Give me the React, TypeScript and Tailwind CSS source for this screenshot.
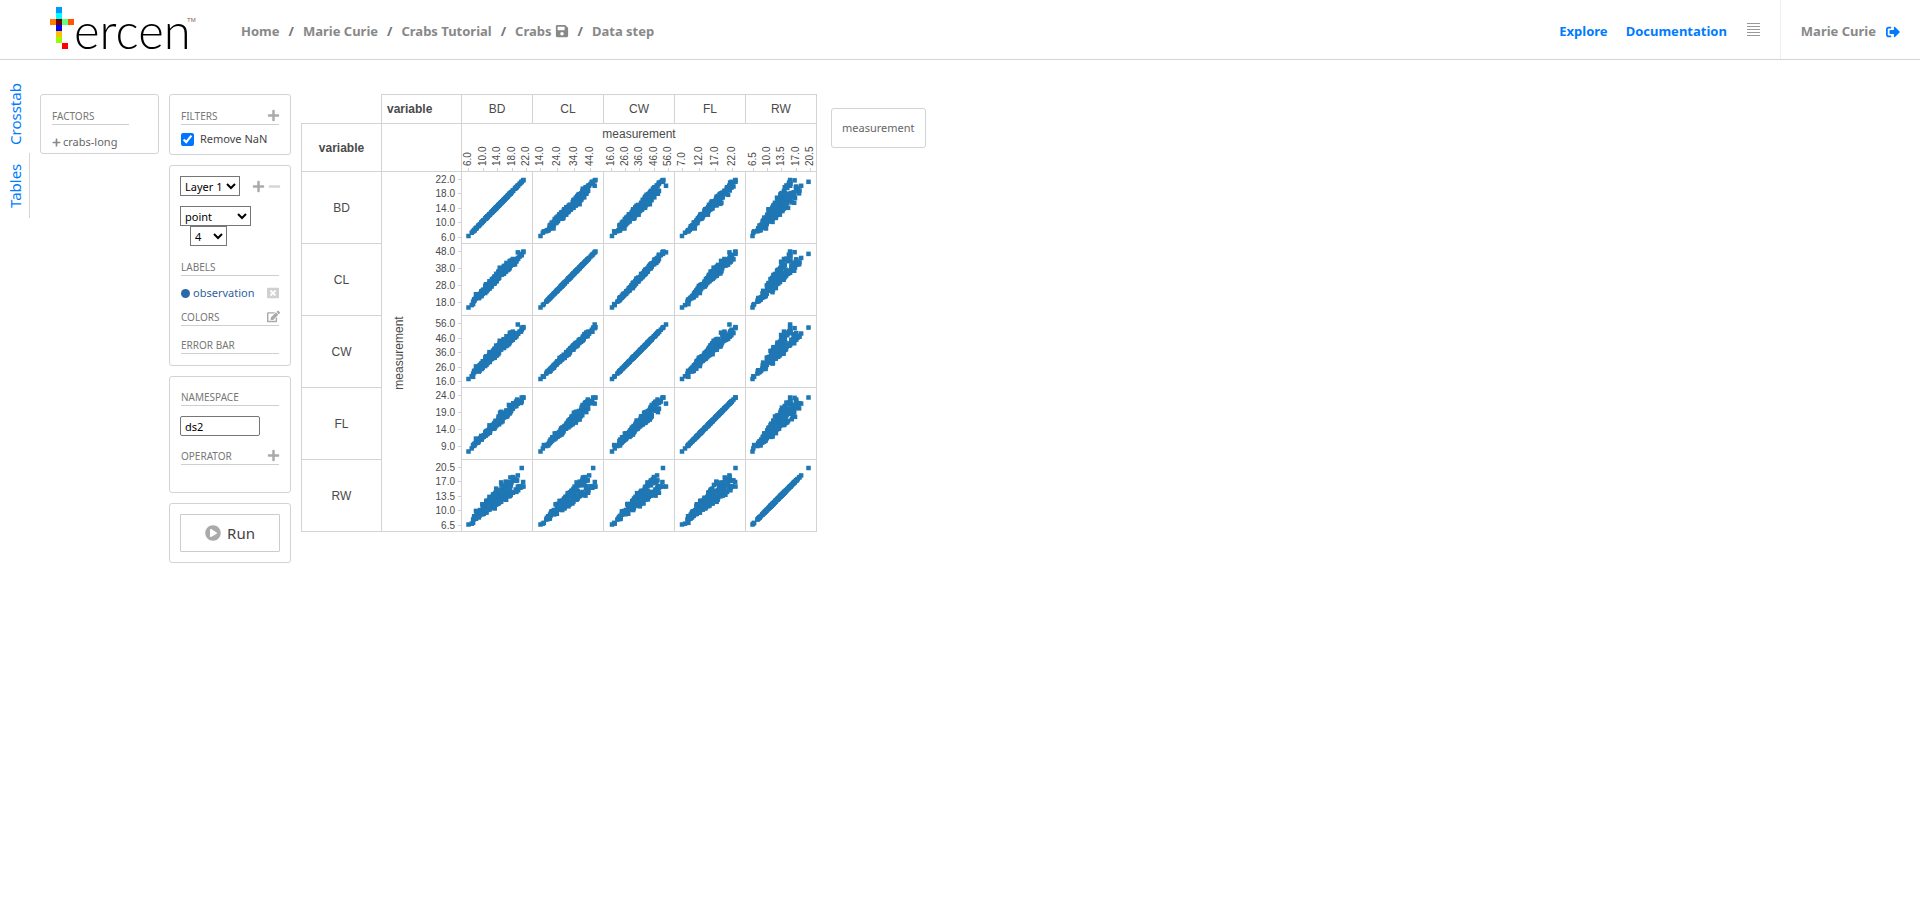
import type { ReactNode } from "react";
import { FaEdit, FaMinus, FaPlayCircle, FaPlus, FaSave, FaSignOutAlt, FaWindowClose } from "react-icons/fa";

/* Frontal lobe, rear width, carapace length, carapace width, body depth (mm). */
const RAW = `
8.1 6.7 16.1 19.0 7.0|8.8 7.7 18.1 20.8 7.4|9.2 7.8 19.0 22.4 7.7|9.6 7.9 20.1 23.1 8.2|9.8 8.0 20.3 23.0 8.2|10.8 9.0 23.0 26.5 9.8|11.1 9.9 23.8 27.1 9.8|11.6 9.1 24.5 28.4 10.4|11.8 9.6 24.2 27.8 9.7|11.8 10.5 25.2 29.3 10.3|
12.2 10.8 27.3 31.6 10.9|12.3 11.0 26.8 31.5 11.4|12.6 10.0 27.7 31.7 11.4|12.8 10.2 27.2 31.8 10.9|12.8 10.9 27.4 31.5 11.0|12.9 11.0 26.8 30.9 11.4|13.1 10.6 28.2 32.3 11.0|13.1 10.9 28.3 32.4 11.2|13.3 11.1 27.8 32.3 11.3|13.9 11.1 29.2 33.3 12.1|
14.3 11.6 31.3 35.5 12.7|14.6 11.3 31.9 36.4 13.7|15.0 10.9 31.4 36.4 13.2|15.0 11.5 32.4 37.0 13.4|15.0 11.9 32.5 37.2 13.6|15.2 12.1 32.3 36.7 13.6|15.4 11.8 33.0 37.5 13.6|15.7 12.6 35.8 40.3 14.5|15.9 12.7 34.0 38.9 14.2|16.1 11.6 33.8 39.0 14.4|
16.1 12.8 34.9 40.7 15.7|16.2 13.3 36.0 41.7 15.4|16.3 12.7 35.6 40.9 14.9|16.4 13.0 35.7 41.8 15.2|16.6 13.5 38.1 43.4 14.9|16.8 12.8 36.2 41.8 14.9|16.9 13.2 37.3 42.7 15.6|17.1 12.6 36.4 42.0 15.1|17.1 12.7 36.7 41.9 15.6|17.2 13.5 37.6 43.9 16.1|
17.7 13.6 38.7 44.5 16.0|17.9 14.1 39.7 44.6 16.8|18.0 13.7 39.2 44.4 16.2|18.8 15.8 42.1 49.0 17.8|19.3 13.5 41.6 47.4 17.8|19.3 13.8 40.9 46.5 16.8|19.7 15.3 41.9 48.5 17.8|19.8 14.2 43.2 49.7 18.6|19.8 14.3 42.4 48.9 18.3|21.3 15.7 47.1 54.6 20.0|
7.2 6.5 14.7 17.1 6.1|9.0 8.5 19.3 22.7 7.7|9.1 8.1 18.5 21.6 7.7|9.1 8.2 19.2 22.2 7.7|9.5 8.2 19.6 22.4 7.8|9.8 8.9 20.4 23.9 8.8|10.1 9.3 20.9 24.4 8.4|10.3 9.5 21.3 24.7 8.9|10.4 9.7 21.7 25.4 8.3|10.8 9.5 22.5 26.3 9.1|
11.0 9.8 22.5 25.7 8.2|11.2 10.0 22.8 26.9 9.4|11.5 11.0 24.7 29.2 10.1|11.6 11.0 24.6 28.5 10.4|11.6 11.4 23.7 27.7 10.0|11.7 10.6 24.9 28.5 10.4|11.9 11.4 26.0 30.1 10.9|12.0 10.7 24.6 28.9 10.5|12.0 11.1 25.4 29.2 11.0|12.6 12.2 26.1 31.6 11.2|
12.8 11.7 27.1 31.2 11.9|12.8 12.2 26.7 31.1 11.1|12.8 12.2 27.9 31.9 11.5|13.0 11.4 27.3 31.8 11.3|13.1 11.5 27.6 32.6 11.1|13.2 12.2 27.9 32.1 11.5|13.4 11.8 28.4 32.7 11.7|13.7 12.5 28.6 33.8 11.9|13.9 13.0 30.0 34.9 13.1|14.7 12.5 30.1 34.7 12.5|
14.9 13.2 30.1 35.6 12.0|15.0 13.8 31.7 36.9 14.0|15.0 14.2 32.8 37.4 14.0|15.1 13.3 31.8 36.3 13.5|15.1 13.5 31.9 37.0 13.8|15.1 13.8 31.7 36.6 13.0|15.2 14.3 33.9 38.5 14.7|15.3 14.2 32.6 38.3 13.8|15.4 13.3 32.4 37.6 13.8|15.5 13.8 33.4 38.7 14.7|
15.6 13.9 32.8 37.9 13.4|15.6 14.7 33.9 39.5 14.3|15.7 13.9 33.6 38.5 14.1|15.8 15.0 34.5 40.3 15.3|16.2 15.2 34.5 40.1 13.9|16.4 14.0 34.2 39.8 15.2|16.7 16.1 36.6 41.9 15.4|17.4 16.9 38.2 44.1 16.6|17.5 16.7 38.6 44.5 17.0|19.2 16.5 40.9 47.9 18.1|
9.1 6.9 16.7 18.6 7.4|10.2 8.2 20.2 22.2 9.0|10.7 8.6 20.7 22.7 9.2|11.4 9.0 22.7 24.8 10.1|12.5 9.4 23.2 26.0 10.8|12.5 9.4 24.2 27.0 11.2|12.7 10.4 26.0 28.8 12.1|13.2 11.0 27.1 30.4 12.2|13.4 10.1 26.6 29.6 12.0|13.7 11.0 27.5 30.5 12.2|
14.0 11.5 29.2 32.2 13.1|14.1 10.4 28.9 31.8 13.5|14.1 10.5 29.1 31.6 13.1|14.1 10.7 28.7 31.9 13.3|14.2 10.6 28.7 31.7 12.9|14.2 10.7 27.8 30.9 12.7|14.2 11.3 29.2 32.2 13.5|14.6 11.3 29.9 33.5 12.8|14.7 11.1 29.0 32.1 13.1|15.1 11.4 30.2 33.3 14.0|
15.1 11.5 30.9 34.0 13.9|15.4 11.1 30.2 33.6 13.5|15.7 12.2 31.7 34.2 14.2|16.2 11.8 32.3 35.3 14.7|16.3 11.6 31.6 34.2 14.5|17.1 12.6 35.0 38.9 15.7|17.4 12.8 36.1 39.5 16.2|17.5 12.0 34.4 37.3 15.3|17.5 12.7 34.6 38.4 16.1|17.8 12.5 36.0 39.8 16.7|
17.9 12.9 36.9 40.9 16.5|18.0 13.4 36.7 41.3 17.1|18.2 13.7 38.8 42.7 17.2|18.4 13.4 37.9 42.2 17.7|18.6 13.4 37.8 41.9 17.3|18.6 13.5 36.9 40.2 17.0|18.8 13.4 37.2 41.1 17.5|18.8 13.8 39.2 43.3 17.9|19.4 14.1 39.1 43.2 17.8|19.4 14.4 39.8 44.3 17.9|
20.1 13.7 40.6 44.5 18.0|20.6 14.4 42.8 46.5 19.6|21.0 15.0 42.9 47.2 19.4|21.5 15.5 45.5 49.7 20.9|21.6 15.4 45.7 49.7 20.6|21.6 14.8 43.4 48.2 20.1|21.9 15.7 45.4 51.0 21.1|22.1 15.8 44.6 49.6 20.5|23.0 16.8 47.2 52.1 21.5|23.1 15.7 47.6 52.8 21.6|
10.7 9.7 21.4 24.0 9.8|11.4 9.2 21.7 24.1 9.7|12.5 10.0 24.1 27.0 10.9|12.6 11.5 25.0 28.1 11.5|12.9 11.2 25.8 29.1 11.9|14.0 11.9 27.0 31.4 12.6|14.0 12.8 28.8 32.4 12.7|14.3 12.2 28.1 31.8 12.5|14.7 13.2 29.6 33.4 12.9|14.9 13.0 30.0 33.7 13.3|
15.0 12.3 30.1 33.3 14.0|15.6 13.5 31.2 35.1 14.1|15.6 14.0 31.6 35.3 13.8|15.6 14.1 31.0 34.5 13.8|15.7 13.6 31.0 34.8 13.8|16.1 13.6 31.6 36.0 14.0|16.1 13.7 31.4 36.1 13.9|16.2 14.0 31.6 35.6 13.7|16.7 14.3 32.3 37.0 14.7|17.1 14.5 33.1 37.2 14.6|
17.5 14.3 34.5 39.6 15.6|17.5 14.4 34.5 39.0 16.0|17.5 14.7 33.3 37.6 14.6|17.6 14.0 34.0 38.6 15.5|18.0 14.9 34.7 39.5 15.7|18.0 16.3 37.9 43.0 17.2|18.3 15.7 35.1 40.5 16.1|18.4 15.5 35.6 40.0 15.9|18.4 15.7 36.5 41.6 16.4|18.5 14.6 37.0 42.0 16.6|
18.6 14.5 34.7 39.4 15.0|18.8 15.2 35.8 40.5 16.6|18.9 16.7 36.3 41.7 15.3|19.1 16.0 37.8 42.3 16.8|19.1 16.3 37.9 42.6 17.2|19.7 16.7 39.9 43.6 18.2|19.9 16.6 39.4 43.9 17.9|19.9 17.9 40.1 46.4 17.9|20.0 16.7 40.4 45.1 17.7|20.1 17.2 39.8 44.1 18.6|
20.3 16.0 39.4 44.1 18.0|20.5 17.5 40.0 45.5 19.2|20.6 17.5 41.5 46.2 19.2|20.9 16.5 39.9 44.7 17.5|21.3 18.4 43.8 48.4 20.0|21.4 18.0 41.2 46.2 18.7|21.7 17.1 41.7 47.2 19.6|21.9 17.2 42.6 47.4 19.5|22.5 17.2 43.0 48.7 19.8|23.1 20.2 46.2 52.5 21.1`;

const CRABS = RAW.trim()
  .split("|")
  .map((row) => row.trim().split(" ").map(Number));

type Variable = {
  name: string;
  field: number;
  min: number;
  max: number;
  /* Cell offsets of the smallest and largest value, across and down. */
  x: [number, number];
  y: [number, number];
  labels: string[];
  xTicks: number[];
  yTicks: number[];
};

/* Ticks ascend in value; yTicks run upward from the bottom of the row. */
const VARIABLES: Variable[] = [
  { name: "BD", field: 4, min: 6.1, max: 21.6, x: [6.5, 61.5], y: [64, 8], labels: ["6.0", "10.0", "14.0", "18.0", "22.0"], xTicks: [7, 22, 36, 51, 65], yTicks: [66, 51, 37, 22, 8] },
  { name: "CL", field: 2, min: 14.7, max: 47.6, x: [7.5, 62.5], y: [63.5, 7.5], labels: ["14.0", "24.0", "34.0", "44.0"], xTicks: [8, 25, 42, 58], yTicks: [59, 42, 25, 8] },
  { name: "CW", field: 3, min: 17.1, max: 54.6, x: [8, 62], y: [63, 8.5], labels: ["16.0", "26.0", "36.0", "46.0", "56.0"], xTicks: [8, 22, 36, 51, 65], yTicks: [66, 52, 37, 23, 8] },
  { name: "FL", field: 0, min: 7.2, max: 23.1, x: [7, 60.5], y: [63.5, 9.5], labels: ["7.0", "12.0", "17.0", "22.0"], xTicks: [8, 25, 41, 58], yTicks: [59, 42, 25, 8] },
  { name: "RW", field: 1, min: 6.5, max: 20.2, x: [6.5, 62.5], y: [64.5, 8], labels: ["6.5", "10.0", "13.5", "17.0", "20.5"], xTicks: [8, 22, 36, 51, 65], yTicks: [66, 51, 37, 22, 8] },
];

const Y_LABELS: Record<string, string[]> = {
  CL: ["18.0", "28.0", "38.0", "48.0"],
  FL: ["9.0", "14.0", "19.0", "24.0"],
};

const CELL_W = 71;
const CELL_H = 72;
const POINT = 4.5;

function scale(v: Variable, value: number, [from, to]: [number, number]) {
  return from + ((value - v.min) / (v.max - v.min)) * (to - from);
}

function Scatter({ col, row }: { col: Variable; row: Variable }) {
  return (
    <svg className="block" width={70} height={71} viewBox="0 0 70 71" role="img" aria-label={`${row.name} by ${col.name}`}>
      {CRABS.map((c, i) => (
        <rect
          key={i}
          x={scale(col, c[col.field], col.x) - POINT / 2}
          y={scale(row, c[row.field], row.y) - POINT / 2}
          width={POINT}
          height={POINT}
          fill="#1f77b4"
        />
      ))}
    </svg>
  );
}

function TopAxis() {
  return (
    <svg className="block" width={354} height={47} viewBox="0 0 354 47" fontFamily="Liberation Sans, Arial, sans-serif" fill="#4a4a4a">
      <text x={177} y={14} fontSize={12} textAnchor="middle">
        measurement
      </text>
      {VARIABLES.map((v, i) =>
        v.xTicks.map((t, k) => {
          const x = i * CELL_W + t;
          return (
            <g key={v.name + k}>
              <rect x={x - 1} y={44} width={1} height={3} fill="#d3d3d3" />
              <text transform={`translate(${x + 2} 42) rotate(-90)`} fontSize={10}>
                {v.labels[k]}
              </text>
            </g>
          );
        }),
      )}
    </svg>
  );
}

function SideAxis() {
  return (
    <svg className="block" width={79} height={359} viewBox="0 0 79 359" fontFamily="Liberation Sans, Arial, sans-serif" fill="#4a4a4a">
      <text transform="translate(21 181) rotate(-90)" fontSize={12} textAnchor="middle">
        measurement
      </text>
      {VARIABLES.map((v, i) =>
        v.yTicks.map((t, k) => {
          const y = i * CELL_H + t;
          return (
            <g key={v.name + k}>
              <rect x={76} y={y - 1} width={3} height={1} fill="#d3d3d3" />
              <text x={73} y={y + 3} fontSize={10} textAnchor="end">
                {(Y_LABELS[v.name] ?? v.labels)[k]}
              </text>
            </g>
          );
        }),
      )}
    </svg>
  );
}

function Crosstab() {
  const line = "border border-[#d3d3d3] p-0";
  return (
    <table className="table-fixed border-collapse w-[516px] shrink-0 font-['Liberation_Sans',Arial,sans-serif] text-xs text-[#4a4a4a]">
      <colgroup>
        <col className="w-20" />
        <col className="w-20" />
        {VARIABLES.map((v) => (
          <col key={v.name} className="w-[71px]" />
        ))}
      </colgroup>
      <thead>
        <tr className="h-[29px]">
          <td className="p-0" />
          <th className="border border-[#d3d3d3] py-0 pr-0 pl-[5px] text-left font-bold">variable</th>
          {VARIABLES.map((v) => (
            <th key={v.name} scope="col" className={`${line} font-normal`}>
              {v.name}
            </th>
          ))}
        </tr>
        <tr className="h-12">
          <th className={`${line} font-bold`}>variable</th>
          <td className={line} />
          <td className={line} colSpan={5}>
            <TopAxis />
          </td>
        </tr>
      </thead>
      <tbody>
        {VARIABLES.map((row, i) => (
          <tr key={row.name} className="h-[72px]">
            <th scope="row" className={`${line} font-normal`}>
              {row.name}
            </th>
            {i === 0 && (
              <td rowSpan={5} className={line}>
                <SideAxis />
              </td>
            )}
            {VARIABLES.map((col) => (
              <td key={col.name} className={line}>
                <Scatter col={col} row={row} />
              </td>
            ))}
          </tr>
        ))}
      </tbody>
    </table>
  );
}

function Logo() {
  const squares: [number, number, string][] = [
    [1, 0, "#0099ff"],
    [1, 1, "#00ffff"],
    [0, 2, "#ff8000"],
    [1, 2, "#730000"],
    [2, 2, "#66ff80"],
    [3, 2, "#ff5500"],
    [1, 3, "#0000ff"],
    [1, 4, "#ffbf00"],
    [1, 5, "#99ff00"],
    [2, 6, "#ff0000"],
  ];
  return (
    <svg className="block" width={148} height={60} viewBox="0 0 148 60" role="img" aria-label="tercen">
      {squares.map(([x, y, fill]) => (
        <rect key={`${x}-${y}`} x={x * 6} y={7 + y * 6} width={6} height={6} fill={fill} />
      ))}
      <text x={24} y={49} fontSize={49} fontWeight={300} fontFamily="Lato, sans-serif" fill="#000">
        ercen
      </text>
      <text x={137} y={22} fontSize={6} fontFamily="Liberation Sans, Arial, sans-serif" fill="#8a5a50">
        TM
      </text>
    </svg>
  );
}

function Panel({ className = "", children }: { className?: string; children: ReactNode }) {
  return <section className={`rounded-[3px] border border-[#d2d3d8] ${className}`}>{children}</section>;
}

function Heading({ children, action }: { children: ReactNode; action?: ReactNode }) {
  return (
    <div className="flex h-4 items-start justify-between border-b border-[#cfcfcf]">
      <h2 className="text-[10px] leading-[14px] text-[#777]">{children}</h2>
      {action}
    </div>
  );
}

function IconButton({ label, children }: { label: string; children: ReactNode }) {
  return (
    <button type="button" aria-label={label} className="-mr-px flex items-center text-[#aaa]">
      {children}
    </button>
  );
}

const PATH = ["Home", "Marie Curie", "Crabs Tutorial", "Crabs", "Data step"];
const SELECT = "h-5 border border-[#767676] bg-white text-[11px] leading-4 text-black";

export default function App() {
  return (
    <div className="min-h-screen bg-white font-['Noto_Sans','Open_Sans',sans-serif] text-xs text-[#666]">
      <header className="flex h-[60px] items-center border-b border-[#d3d3d8]">
        <a href="#" className="ml-[50px] self-start">
          <Logo />
        </a>
        <nav aria-label="Breadcrumb" className="ml-[43px] pt-1">
          <ol className="flex items-center gap-[9px] text-[13px] font-bold">
            {PATH.map((name, i) => (
              <li key={name} className="flex items-center gap-[9px]">
                {i > 0 && <span className="text-[#6c757d]">/</span>}
                <a href="#" className="flex items-center gap-[3px] text-[#888]">
                  {name}
                  {name === "Crabs" && <FaSave size={14} />}
                </a>
              </li>
            ))}
          </ol>
        </nav>
        <div className="ml-auto flex h-full items-center text-[13px] font-bold">
          <nav aria-label="Main" className="flex items-center gap-[18px] pt-1 text-[#007bff]">
            <a href="#">Explore</a>
            <a href="#">Documentation</a>
            <button type="button" aria-label="Menu" className="mb-1 ml-[2px] mr-5">
              <svg width={13} height={13} viewBox="0 0 13 13" stroke="#999" strokeWidth={1}>
                <path d="M0 .5h13M0 3.5h13M0 6.5h13M0 9.5h13M0 12.5h13" />
              </svg>
            </button>
          </nav>
          <div className="flex h-full items-center gap-[10px] border-l border-[#eee] pl-5 pr-5 pt-1">
            <span className="text-[#888]">Marie Curie</span>
            <button type="button" aria-label="Sign out" className="text-[#007bff]">
              <FaSignOutAlt size={14} />
            </button>
          </div>
        </div>
      </header>

      <div className="flex items-start">
        <nav aria-label="Views" className="flex w-[30px] flex-col pt-4 text-[15px] leading-5 text-[#007bff]">
          <a href="#" className="flex h-[77px] rotate-180 items-center justify-center [writing-mode:vertical-rl]">
            Crosstab
          </a>
          <a href="#" className="flex h-[65px] rotate-180 items-center justify-center border-l border-[#d3d3d8] [writing-mode:vertical-rl]">
            Tables
          </a>
        </nav>

        <main className="flex items-start gap-[10px] pl-[10px] pt-[34px]">
          <Panel className="h-[60px] w-[119px] pl-[11px] pr-[29px] pt-[14px]">
            <Heading>FACTORS</Heading>
            <button type="button" className="mt-[9px] flex items-center gap-[2px] whitespace-nowrap text-[11px] leading-4">
              <FaPlus size={9} className="text-[#888]" />
              crabs-long
            </button>
          </Panel>

          <div className="flex w-[122px] flex-col gap-[10px]">
            <Panel className="h-[61px] px-[11px] pt-[14px]">
              <Heading action={<IconButton label="Add filter"><FaPlus size={13} /></IconButton>}>FILTERS</Heading>
              <label className="mt-[6px] flex items-center gap-[6px] whitespace-nowrap text-[11px] leading-4 text-[#444]">
                <input type="checkbox" defaultChecked className="size-[13px] accent-[#0075ff]" />
                Remove NaN
              </label>
            </Panel>

            <Panel className="h-[201px] px-[11px] pt-[10px]">
              <div className="-ml-px flex items-center">
                <select aria-label="Layer" className={`${SELECT} w-[62px]`}>
                  <option>Layer 1</option>
                </select>
                <div className="ml-3 flex gap-1">
                  <IconButton label="Add layer"><FaPlus size={13} /></IconButton>
                  <button type="button" aria-label="Remove layer" className="text-[#d6d6d6]">
                    <FaMinus size={13} />
                  </button>
                </div>
              </div>
              <div className="-ml-px mt-[10px] flex flex-col items-start">
                <select aria-label="Mark" className={`${SELECT} w-[71px]`}>
                  <option>point</option>
                </select>
                <select aria-label="Size" className={`${SELECT} ml-[10px] w-[37px]`}>
                  <option>4</option>
                </select>
              </div>
              <div className="mt-[14px]">
                <Heading>LABELS</Heading>
              </div>
              <div className="mt-[9px] flex h-4 items-center justify-between text-[11px] text-[#2f5f9e]">
                <span className="flex items-center gap-[3px]">
                  <span className="size-[9px] rounded-full bg-[#2b6aa8]" />
                  observation
                </span>
                <button type="button" aria-label="Remove label" className="text-[#d0d0d0]">
                  <FaWindowClose size={12} />
                </button>
              </div>
              <div className="mt-[9px]">
                <Heading action={<IconButton label="Edit colors"><FaEdit size={13} /></IconButton>}>COLORS</Heading>
              </div>
              <div className="mt-3">
                <Heading>ERROR BAR</Heading>
              </div>
            </Panel>

            <Panel className="h-[117px] px-[11px] pt-[13px]">
              <label htmlFor="namespace" className="block">
                <Heading>NAMESPACE</Heading>
              </label>
              <input
                id="namespace"
                type="text"
                defaultValue="ds2"
                className="-ml-px mt-[10px] mb-[13px] block h-5 w-20 rounded-[2px] border border-[#767676] px-1 text-[11px] text-black"
              />
              <Heading action={<IconButton label="Add operator"><FaPlus size={13} /></IconButton>}>OPERATOR</Heading>
            </Panel>

            <Panel className="h-[60px] p-[10px]">
              <button
                type="button"
                className="flex h-[38px] w-full items-center justify-center gap-[6px] rounded-[1px] border border-[#ccc] text-[15px] text-[#444]"
              >
                <FaPlayCircle size={16} className="text-[#aaa]" />
                Run
              </button>
            </Panel>
          </div>

          <Crosstab />

          <Panel className="ml-1 mt-[14px] flex h-10 items-center px-[10px] text-[11px]">measurement</Panel>
        </main>
      </div>
    </div>
  );
}
